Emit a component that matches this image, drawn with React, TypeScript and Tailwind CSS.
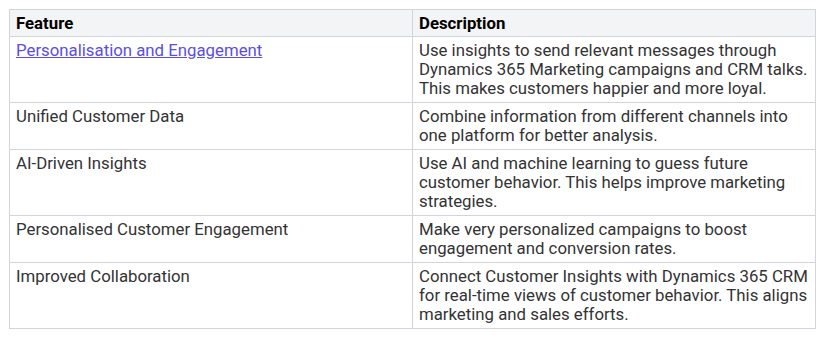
import React from "react";

const rows: { f: string; d: string; link?: boolean }[] = [
  {
    f: "Personalisation and Engagement",
    d: "Use insights to send relevant messages through Dynamics 365 Marketing campaigns and CRM talks. This makes customers happier and more loyal.",
    link: true,
  },
  { f: "Unified Customer Data", d: "Combine information from different channels into one platform for better analysis." },
  {
    f: "AI-Driven Insights",
    d: "Use AI and machine learning to guess future customer behavior. This helps improve marketing strategies.",
  },
  {
    f: "Personalised Customer Engagement",
    d: "Make very personalized campaigns to boost engagement and conversion rates.",
  },
  {
    f: "Improved Collaboration",
    d: "Connect Customer Insights with Dynamics 365 CRM for real-time views of customer behavior. This aligns marketing and sales efforts.",
  },
];

export default function App() {
  return (
    <div className="bg-white p-[9px]" style={{ fontFamily: "Roboto, 'Liberation Sans', sans-serif" }}>
      <table className="w-[807px] table-fixed border-collapse border border-[#d1d5db] text-[16.8px] leading-[19px] text-[#333333]">
        <thead>
          <tr className="bg-[#f3f4f6]">
            <th className="w-1/2 border border-[#d1d5db] px-1.5 py-[3.5px] text-left font-bold text-black">Feature</th>
            <th className="w-1/2 border border-[#d1d5db] px-1.5 py-[3.5px] text-left font-bold text-black">Description</th>
          </tr>
        </thead>
        <tbody>
          {rows.map((r) => (
            <tr key={r.f}>
              <td className="border border-[#d1d5db] px-1.5 py-1 align-top">
                {r.link ? (
                  <a href="#" className="text-[#5b4ee6] underline">
                    {r.f}
                  </a>
                ) : (
                  r.f
                )}
              </td>
              <td className="border border-[#d1d5db] px-1.5 py-1 align-top">{r.d}</td>
            </tr>
          ))}
        </tbody>
      </table>
    </div>
  );
}
